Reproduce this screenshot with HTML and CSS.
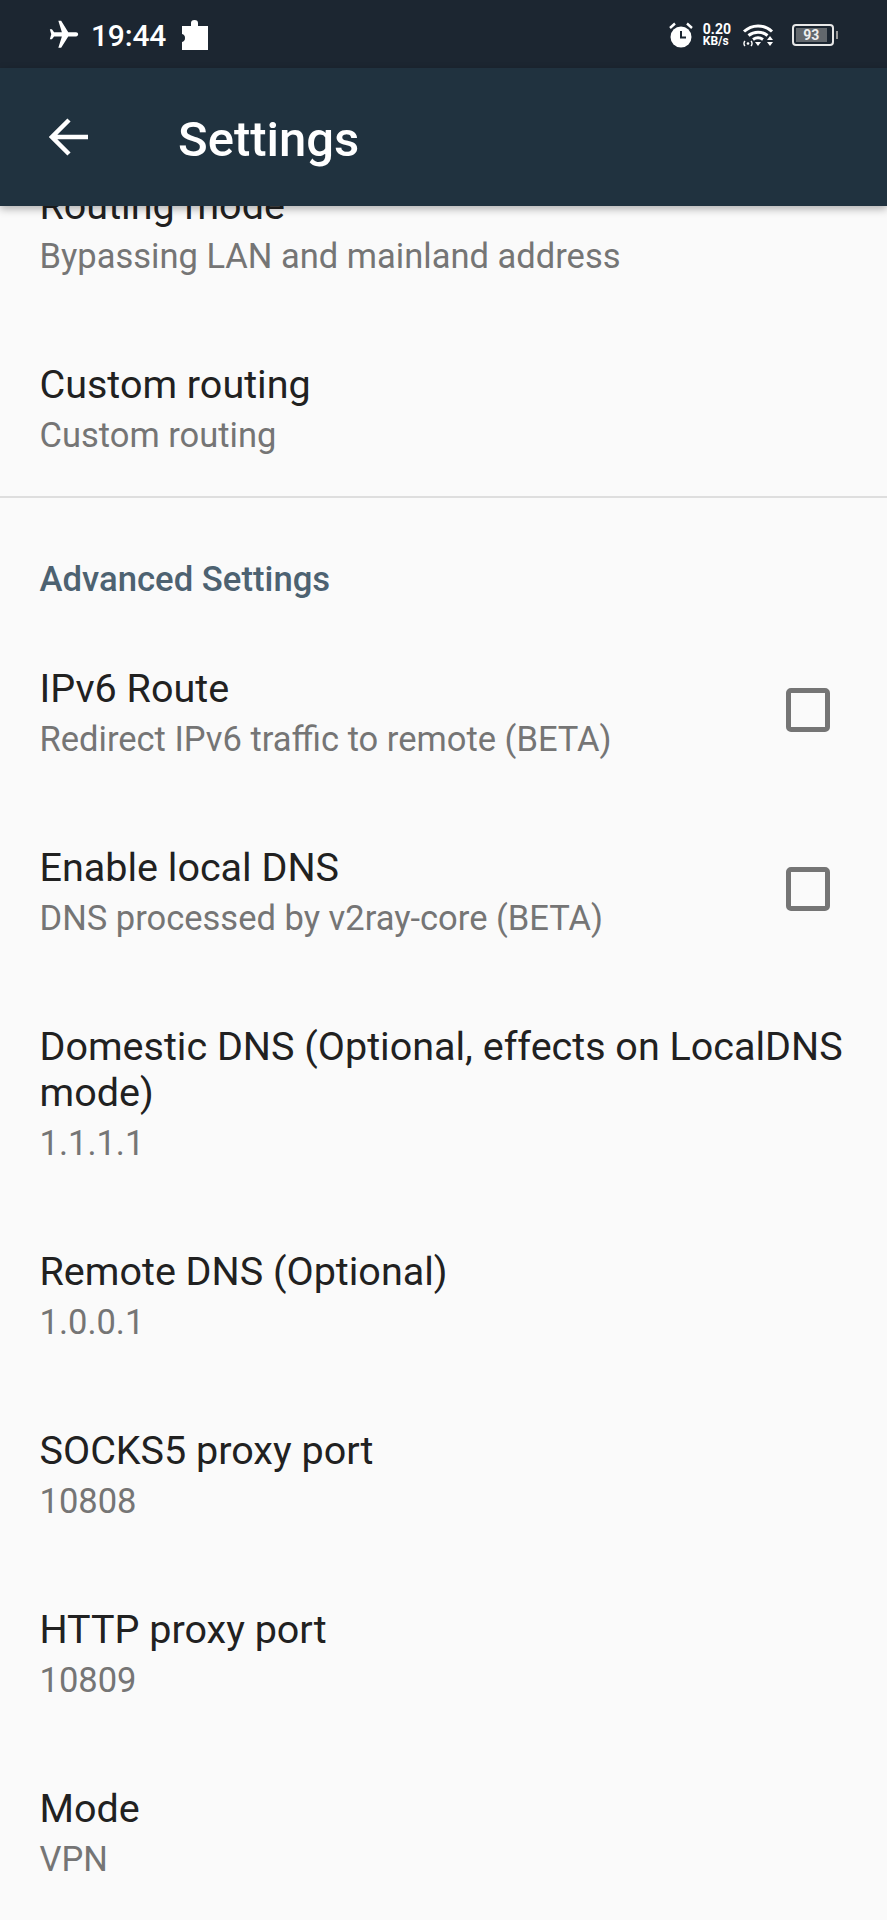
FILE: index.html
```html
<!DOCTYPE html>
<html lang="en">

<head>
    <meta charset="UTF-8">
    <meta name="viewport" content="width=device-width, initial-scale=1.0">
    <title>Settings</title>
    <link rel="stylesheet" href="styles.css">
</head>

<body>
    <div class="status-bar">
        <div class="status-left">
            <svg class="icon-plane" viewBox="0 0 24 24"><path d="M21 16v-2l-8-5V3.5c0-.83-.67-1.5-1.5-1.5S10 2.67 10 3.5V9l-8 5v2l8-2.5V19l-2 1.5V22l3.5-1 3.5 1v-1.5L13 19v-5.5l8 2.5z" transform="rotate(90 12 12)"/></svg>
            <span class="status-time">19:44</span>
            <svg class="icon-puzzle" viewBox="0 0 26 30"><path d="M0 6h9V3a3.500 3 0 0 1 7 0v3h10v24H0v-8a4 4 0 0 0 3-4 4 4 0 0 0-3-4z"/></svg>
        </div>
        <div class="status-right">
            <svg class="icon-alarm" viewBox="0 0 26 26">
                <circle cx="13" cy="15" r="10.500" fill="#fff"/>
                <path d="M2 6l5-4.500M24 6l-5-4.500" stroke="#fff" stroke-width="2.400" fill="none"/>
                <path d="M13 9v6.500h5" stroke="#1c2631" stroke-width="2" fill="none"/>
            </svg>
            <div class="net-speed"><span>0.20</span><span>KB/s</span></div>
            <svg class="icon-wifi" viewBox="0 0 32 24">
                <path d="M2 8.500C10 1 22 1 30 8.500M6.500 12.500C12 8 20 8 25.500 12.500M11 16.500c3-2 7-2 10 0" stroke="#fff" stroke-width="3" fill="none"/>
                <path d="M13 19h6l-3 4zM25 17h6l-3-4zM25 19h6l-3 4z" fill="#fff"/>
                <path d="M3 18a3.500 3.500 0 0 0 0 5M9 18a3.500 3.500 0 0 1 0 5" stroke="#fff" stroke-width="1.400" fill="none"/>
                <circle cx="6" cy="20.500" r="1.300" fill="#fff"/>
            </svg>
            <div class="battery"><div class="battery-level">93</div></div>
            <div class="battery-nub"></div>
        </div>
    </div>

    <div class="app-bar">
        <svg class="icon-back" viewBox="0 0 40 40"><path d="M39 20H4M20 3L3 20l17 17" stroke="#fff" stroke-width="4.500" fill="none"/></svg>
        <h1 class="app-title">Settings</h1>
    </div>

    <div class="content">
        <div class="pref-list">
            <div class="pref">
                <div class="pref-text">
                    <div class="pref-title">Routing mode</div>
                    <div class="pref-summary">Bypassing LAN and mainland address</div>
                </div>
            </div>
            <div class="pref">
                <div class="pref-text">
                    <div class="pref-title">Custom routing</div>
                    <div class="pref-summary">Custom routing</div>
                </div>
            </div>

            <div class="divider"></div>
            <div class="category">Advanced Settings</div>

            <div class="pref">
                <div class="pref-text">
                    <div class="pref-title">IPv6 Route</div>
                    <div class="pref-summary">Redirect IPv6 traffic to remote (BETA)</div>
                </div>
                <div class="checkbox"></div>
            </div>
            <div class="pref">
                <div class="pref-text">
                    <div class="pref-title">Enable local DNS</div>
                    <div class="pref-summary">DNS processed by v2ray-core (BETA)</div>
                </div>
                <div class="checkbox"></div>
            </div>
            <div class="pref">
                <div class="pref-text">
                    <div class="pref-title">Domestic DNS (Optional, effects on LocalDNS mode)</div>
                    <div class="pref-summary">1.1.1.1</div>
                </div>
            </div>
            <div class="pref">
                <div class="pref-text">
                    <div class="pref-title">Remote DNS (Optional)</div>
                    <div class="pref-summary">1.0.0.1</div>
                </div>
            </div>
            <div class="pref">
                <div class="pref-text">
                    <div class="pref-title">SOCKS5 proxy port</div>
                    <div class="pref-summary">10808</div>
                </div>
            </div>
            <div class="pref">
                <div class="pref-text">
                    <div class="pref-title">HTTP proxy port</div>
                    <div class="pref-summary">10809</div>
                </div>
            </div>
            <div class="pref">
                <div class="pref-text">
                    <div class="pref-title">Mode</div>
                    <div class="pref-summary">VPN</div>
                </div>
            </div>
        </div>
    </div>
</body>

</html>
```

FILE: styles.css
```css
html,
body {
    height: 100%;
}

body {
    font-family: Roboto, "Liberation Sans", sans-serif;
    background-color: #fafafa;
    color: #212121;
    margin: 0;
    padding: 0;
    display: flex;
    flex-direction: column;
    overflow: hidden;
}

/* Status bar */
.status-bar {
    height: 68px;
    box-sizing: border-box;
    flex-shrink: 0;
    background-color: #1c2631;
    color: #fff;
    display: flex;
    align-items: center;
    justify-content: space-between;
    padding: 2px 49px 0 47px;
}

.status-left,
.status-right {
    display: flex;
    align-items: center;
}

.icon-plane {
    width: 34px;
    height: 34px;
    fill: #fff;
}

.status-time {
    font-size: 30px;
    font-weight: 500;
    margin-left: 10px;
    letter-spacing: -0.2px;
}

.icon-puzzle {
    width: 26px;
    height: 30px;
    fill: #fff;
    margin-left: 16px;
}

.icon-alarm {
    width: 26px;
    height: 26px;
}

.net-speed {
    display: flex;
    flex-direction: column;
    margin-left: 9px;
    font-size: 12px;
    font-weight: 700;
    line-height: 12px;
}

.net-speed span:first-child {
    font-size: 14px;
}

.icon-wifi {
    width: 32px;
    height: 24px;
    margin-left: 11px;
}

.battery {
    width: 42px;
    height: 22px;
    box-sizing: border-box;
    border: 2px solid #e8e8e8;
    border-radius: 4px;
    padding: 2px;
    margin-left: 18px;
}

.battery-level {
    height: 100%;
    width: 90%;
    background-color: #63686d;
    color: #eee;
    font-size: 14px;
    font-weight: 700;
    line-height: 14px;
    text-align: center;
}

.battery-nub {
    width: 2px;
    height: 8px;
    background-color: #9a9a9a;
    margin-left: 2px;
}

/* App bar */
.app-bar {
    height: 138px;
    flex-shrink: 0;
    background-color: #20323f;
    display: flex;
    align-items: center;
    padding-left: 49px;
    box-shadow: 0 3px 8px rgba(0, 0, 0, 0.3);
    z-index: 1;
}

.icon-back {
    width: 40px;
    height: 40px;
}

.app-title {
    color: #fff;
    font-size: 49px;
    font-weight: 500;
    margin: 5px 0 0 89px;
}

/* Preference list */
.content {
    flex: 1;
    overflow: hidden;
}

.pref-list {
    margin-top: -64px;
}

.pref {
    display: flex;
    align-items: center;
    padding: 41px 40px 42px 39.500px;
}

.pref-text {
    flex: 1;
}

.pref-title {
    font-size: 39.500px;
    line-height: 46px;
    color: #212121;
}

.pref-summary {
    font-size: 34.500px;
    line-height: 46px;
    margin-top: 4px;
    color: #757575;
}

.checkbox {
    width: 44px;
    height: 44px;
    box-sizing: border-box;
    border: 5px solid #757575;
    border-radius: 5px;
    margin: 0 17px 9px 0;
}

.divider {
    height: 2px;
    background-color: #dedede;
    margin-top: -4px;
}

.category {
    font-size: 34.700px;
    font-weight: 500;
    line-height: 40px;
    color: #4d6271;
    padding: 61px 40px 26px 39.500px;
}
```
